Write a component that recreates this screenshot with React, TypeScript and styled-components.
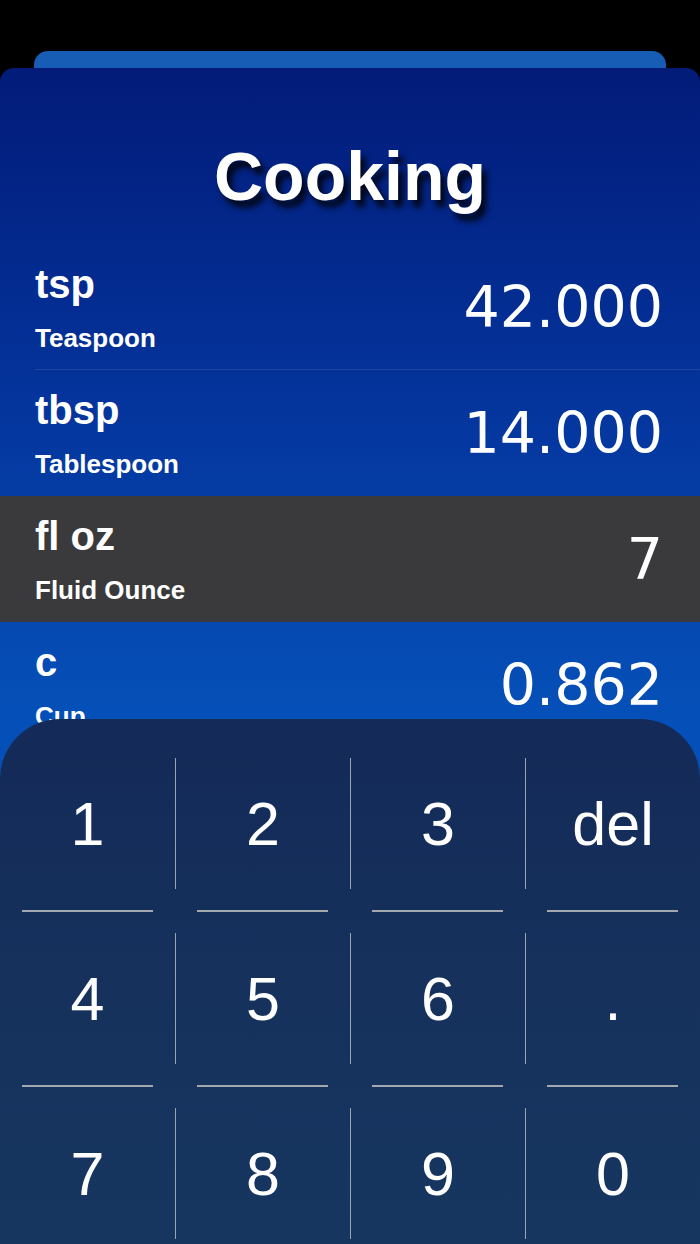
import styled, { createGlobalStyle } from 'styled-components';

const units = [
  { id: 'tsp', short: 'tsp', name: 'Teaspoon', value: '42.000' },
  { id: 'tbsp', short: 'tbsp', name: 'Tablespoon', value: '14.000' },
  { id: 'floz', short: 'fl oz', name: 'Fluid Ounce', value: '7', active: true },
  { id: 'c', short: 'c', name: 'Cup', value: '0.862' }
];

const keyRows = [
  ['1', '2', '3', 'del'],
  ['4', '5', '6', '.'],
  ['7', '8', '9', '0']
];

const GlobalStyle = createGlobalStyle`
  html, body {
    margin: 0;
    padding: 0;
    background: #000;
  }
  body {
    font-family: 'Liberation Sans', Arial, sans-serif;
  }
`;

export default function App() {
  return (
    <>
      <GlobalStyle />
      <Screen>
        <Tab />
        <Card>
          <Title>Cooking</Title>
          <UnitList>
            {units.map((u, i) => {
              const next = units[i + 1];
              const divider = !u.active && !!next && !next.active;
              return (
                <UnitRow key={u.id} $active={!!u.active}>
                  <UnitInner $divider={divider}>
                    <UnitLabels>
                      <UnitShort>{u.short}</UnitShort>
                      <UnitName>{u.name}</UnitName>
                    </UnitLabels>
                    <UnitValue>{u.value}</UnitValue>
                  </UnitInner>
                </UnitRow>
              );
            })}
          </UnitList>
        </Card>
        <Keypad>
          {keyRows.map((row, i) => (
            <div key={i}>
              {i > 0 && (
                <DividerRow>
                  {row.map((k) => (
                    <DividerLine key={k} />
                  ))}
                </DividerRow>
              )}
              <KeyRow>
                {row.map((k, j) => (
                  <Key key={k} $first={j === 0}>
                    {k}
                  </Key>
                ))}
              </KeyRow>
            </div>
          ))}
        </Keypad>
      </Screen>
    </>
  );
}

const Screen = styled.div`
  position: relative;
  width: 700px;
  height: 1244px;
  padding-top: 51px;
  box-sizing: border-box;
  overflow: hidden;
  background: #000;
  display: flex;
  flex-direction: column;
`;

const Tab = styled.div`
  height: 17px;
  margin: 0 34px;
  background: #175cb5;
  border-radius: 14px 14px 0 0;
`;

const Card = styled.div`
  flex: 1;
  border-radius: 14px 14px 0 0;
  background: linear-gradient(180deg, #021b79 0px, #04349c 330px, #0550b8 640px);
  padding-top: 70px;
`;

const Title = styled.h1`
  margin: 0 0 30px;
  text-align: center;
  font-size: 68px;
  line-height: 76px;
  font-weight: 700;
  color: #fff;
  text-shadow: 5px 7px 6px rgba(0, 0, 0, 0.85);
`;

const UnitList = styled.div`
  display: flex;
  flex-direction: column;
`;

const UnitRow = styled.div<{ $active: boolean }>`
  padding-left: 35px;
  background: ${(p) => (p.$active ? '#3a3a3c' : 'transparent')};
`;

const UnitInner = styled.div<{ $divider: boolean }>`
  height: 126px;
  box-sizing: border-box;
  padding-right: 37px;
  display: flex;
  align-items: center;
  justify-content: space-between;
  border-bottom: 1px solid ${(p) => (p.$divider ? 'rgba(110, 130, 180, 0.25)' : 'transparent')};
  color: #fff;
`;

const UnitLabels = styled.div`
  display: flex;
  flex-direction: column;
  padding-top: 2px;
`;

const UnitShort = styled.span`
  font-size: 40px;
  line-height: 44px;
  font-weight: 700;
`;

const UnitName = styled.span`
  margin-top: 17px;
  font-size: 26px;
  line-height: 30px;
  font-weight: 700;
`;

const UnitValue = styled.span`
  font-family: 'DejaVu Sans', 'Liberation Sans', sans-serif;
  font-size: 57px;
  line-height: 66px;
  font-weight: 400;
`;

const Keypad = styled.div`
  position: absolute;
  left: 0;
  right: 0;
  bottom: 0;
  height: 525px;
  box-sizing: border-box;
  padding-top: 39px;
  border-radius: 60px 60px 0 0;
  background: linear-gradient(180deg, #142a58 0%, #15315c 50%, #163660 100%);
`;

const KeyRow = styled.div`
  display: grid;
  grid-template-columns: repeat(4, 175px);
`;

const Key = styled.div<{ $first: boolean }>`
  height: 131px;
  display: flex;
  align-items: center;
  justify-content: center;
  border-left: ${(p) => (p.$first ? 'none' : '1px solid #9ea3ad')};
  color: #fff;
  font-size: 61px;
  font-weight: 400;
`;

const DividerRow = styled.div`
  display: grid;
  grid-template-columns: repeat(4, 175px);
  height: 44px;
  align-items: center;
`;

const DividerLine = styled.div`
  height: 2px;
  margin: 0 22px;
  background: #a3a7ae;
`;
